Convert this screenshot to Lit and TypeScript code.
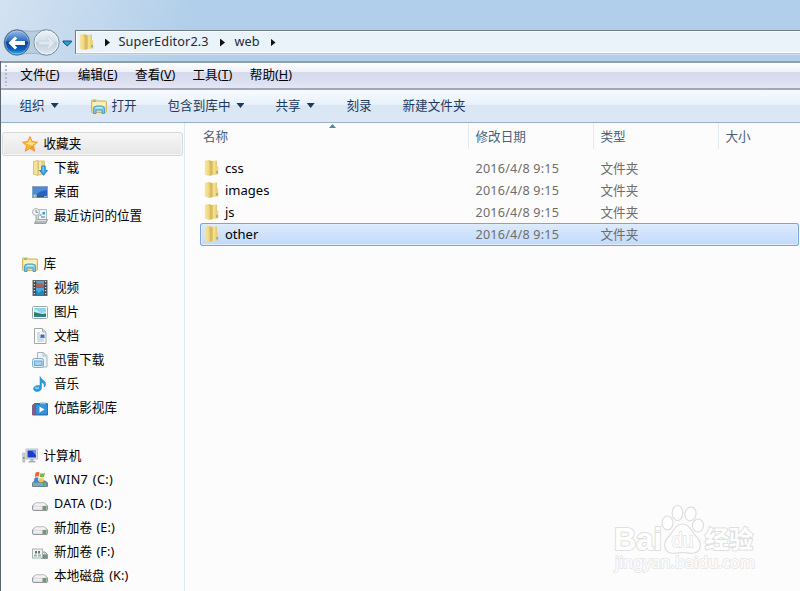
import { LitElement, html, css, svg } from "lit";
import { customElement } from "lit/decorators.js";
import { classMap } from "lit/directives/class-map.js";

const drive = svg`<path d="M3.500 7h9l3 3v3q0 1.500-1.500 1.500H2Q.5 14.500.5 13v-3z" fill="#d3d4da" stroke="#94969d"/><path d="M3.700 7.300h8.600l2.200 2.500h-13z" fill="#f4f4f6"/><path d="M1.500 10.500h9v3h-9z" fill="#ececf1"/><rect x="10.500" y="10" width="4" height="4" fill="#8a8e92"/><rect x="12" y="10.500" width="2" height="3" fill="#3fb82f"/>`;

const library = svg`<path d="M.5 3q0-1 1-1h4l1 1h8q1 0 1 1v9.500q0 1-1 1h-13q-1 0-1-1z" fill="#efdc8d" stroke="#d0b767"/><path d="M1.500 4h13v4h-13z" fill="#fbf1bb"/><rect x="2" y="2.500" width="3" height="1.300" fill="#6dc25a"/><path d="M2.500 15.500V11q0-3 3-3h5q3 0 3 3v4.500H11V12H5v3.500z" fill="#7cc6ea" stroke="#4e9fca"/><path d="M4 10.500Q4 9 6 9h4q2 0 2 1.500z" fill="#c4ebfa"/>`;

const icons: Record<string, unknown> = {
  star: svg`<path d="M8 .5l2.200 5 5.300.7-4 3.600 1.200 5.400L8 12.500 3.300 15.200l1.200-5.400-4-3.600 5.300-.7z" fill="#fdb62f" stroke="#e58b35" stroke-width=".8"/><path d="M8 2.500l1.500 4 4 .4-3.500 2.600L3 7l3.600-.5z" fill="#ffe27d"/><path d="M8 11l3.500 3-.8-4z" fill="#f4902b"/>`,
  download: svg`<path d="M6 1h6.500v13L6 15z" fill="#ebd27d" stroke="#d5bb6a" stroke-width=".8"/><path d="M1.500 1.500L6 .5v15l-4.500-1.200z" fill="#f5e29a" stroke="#d3b966" stroke-width=".8"/><path d="M7 1.500h2V14H7z" fill="#f9e9ac"/><path d="M9.800 6h3.400v4.500h2.300l-4 4.800-4-4.800h2.300z" fill="#38a6ee" stroke="#2278c0" stroke-width=".9"/><path d="M10.500 6.500H12v5h-1.500z" fill="#7fcdf9"/>`,
  desktop: svg`<rect x=".5" y="2.500" width="15" height="11" fill="#2762bf" stroke="#8ba3be"/><path d="M1 3h14v3Q8 6 3 12H1z" fill="#4b89da"/><path d="M1 12h14v1.300H1z" fill="#2c4f85"/><circle cx="3" cy="12" r="1.800" fill="#8dd3e8"/><path d="M3 11h1.700v2H3z" fill="#e7a347"/><path d="M12 12h3v1h-3z" fill="#9ab6d7"/>`,
  recent: svg`<path d="M6.500 1.500h8v11h-8z" fill="#f3f6f8" stroke="#b0b8bc"/><path d="M7.500 6h2v2h-2zM9 8h4v2H9z" fill="#8bbbd9"/><rect x="10.500" y="4" width="2.500" height="2.500" fill="#3f93d3"/><circle cx="4" cy="4" r="3.500" fill="#f1f3f3" stroke="#adb2b4"/><path d="M4 2v2.300h2" fill="none" stroke="#7d888e"/><path d="M4.500 11.500h11l-1.500 4H2.500z" fill="#b4b8bb" stroke="#9ca1a4"/><path d="M4.500 8v4" stroke="#b3b8bb" stroke-width="2"/><path d="M4.500 12.500h9.500" stroke="#dfe2e4"/>`,
  library,
  video: svg`<rect x="1" y=".5" width="14" height="15" fill="#3a434b" stroke="#62676c"/><rect x="4" y="1" width="8" height="6.500" fill="#4ba5d8"/><rect x="4" y="8" width="8" height="7" fill="#4baae2"/><path d="M4 2l3 2 2-1 3 2v2.500H4z" fill="#a36259"/><path d="M4 10l3 3 3-3 2 2v3H4z" fill="#2a82ba"/><path d="M2.500 1v14M13.500 1v14" stroke="#d5dce0" stroke-width="1.300" stroke-dasharray="1.300 1.700"/>`,
  picture: svg`<rect x=".5" y="2.500" width="15" height="12" rx="1" fill="#fff" stroke="#9da8ad"/><rect x="2" y="4" width="12" height="9" fill="#8bd5ee"/><path d="M2 5l4 2 3 2 5-1v2H2z" fill="#c6eff3"/><path d="M2 8l4 1 4 1 4-.5v3H2z" fill="#2c8067"/><path d="M2 11.500h12V13H2z" fill="#377dac"/>`,
  document: svg`<path d="M2.500 .5h8L14 4v11.500H2.500z" fill="#fcfdfe" stroke="#a0a7ab"/><path d="M10.500.5V4H14" fill="#dce2e7" stroke="#a0a9ae"/><path d="M5 5h3M5 7h3M5 9h3M5 11h7M5 13h7" stroke="#b0bdce"/><rect x="8.500" y="6.500" width="4" height="3.500" fill="#2d72b8"/><path d="M8.500 9h4v1h-4z" fill="#43a283"/>`,
  thunder: svg`<path d="M5.500.5h6l3.500 3V15h-9.500z" fill="#eff5f9" stroke="#a3b4bd"/><path d="M11 .5V4h4" fill="#d1e4ef" stroke="#a9bac4"/><rect x=".5" y="6.500" width="11" height="9" rx="2" fill="#e2f1f9" stroke="#8aa9ba"/><rect x="2.500" y="9" width="7.500" height="4.500" fill="#9ed4f6" stroke="#5ba7d7"/>`,
  music: svg`<path d="M8 .5c1 3.500 6.500 4 5.500 8.500-.2 1-.6 1.500-1.500 2 1-3-.8-4-2.500-4.500V12c0 2-2 3.500-4.500 3.500-2.200 0-3.500-1.200-3.500-2.700 0-2.400 3.500-4.200 6.500-3z" fill="#2c9ade" stroke="#2c7fbb" stroke-width=".5"/><ellipse cx="5" cy="12" rx="2.300" ry="1.200" fill="#74c9f5"/>`,
  youku: svg`<path d="M.5 5.500l2-2H15q.5 0 .5.500v11H.5z" fill="#2777be" stroke="#3572ac"/><path d="M8 2.500h6v2H8z" fill="#7bb7df"/><path d="M.5 4.500h2V15h-2z" fill="#ce4554"/><path d="M4 5h11v9H4z" fill="#3593dc"/><path d="M7.500 6.500v6l5-3z" fill="#fff"/>`,
  computer: svg`<path d="M.8 5h2v9h-2z" fill="#d7dadd" stroke="#a1a6aa" stroke-width=".7"/><path d="M1 9h1.500v2H1z" fill="#4abf41"/><rect x="4" y="1" width="11.500" height="10" fill="#dfe1e5" stroke="#b1b5ba" stroke-width=".8"/><rect x="5.500" y="2.500" width="8.500" height="7" fill="#163fc6"/><path d="M10 2.500h4v5z" fill="#6795f0"/><path d="M8.500 11h3v2h2v1.500h-7V13h2z" fill="#acb1b6"/>`,
  windows: svg`<path d="M2.500 9h11l2 2v3.500H.5V11z" fill="#668ba0" stroke="#6c8592"/><path d="M1 11h10v3H1z" fill="#7daabd"/><rect x="12" y="11" width="2" height="3" fill="#57cc39"/><path d="M3.500.8Q5.700-.7 7.500.5L6.700 4.500Q5 3.800 2.700 5z" fill="#ec642e"/><path d="M8.500 1q1.800 1 4.500 0L12 5q-2 1-4.300-.2z" fill="#78b943"/><path d="M2.500 6q2-1.200 4-.3l-.8 4q-2-1-4 .2z" fill="#3989da"/><path d="M7.500 6q2 1 4.300 0L11 10q-2 .8-4.300-.3z" fill="#f4c634"/>`,
  drive,
  shared: svg`<path d="M9 8h4l2.500 2.500v4H9z" fill="#d7d8db" stroke="#94979a"/><path d="M11 10.500h4V14h-4z" fill="#7c8284"/><rect x="12.500" y="10.500" width="1.500" height="3" fill="#4dc436"/><rect x=".5" y="5" width="10" height="9" fill="#eff3f2" stroke="#a9b2b0"/><path d="M3 7h2v2.500H3zM6 7h2v2.500H6z" fill="#85705f"/><path d="M2 10.500h3v2H2zM6 10.500h3v2H6z" fill="#8ec0b8"/>`,
  folder: svg`<defs><linearGradient id="fa"><stop stop-color="#f7e6a3"/><stop offset=".5" stop-color="#efd983"/><stop offset="1" stop-color="#cfae50"/></linearGradient><linearGradient id="fb"><stop stop-color="#e5c766"/><stop offset=".45" stop-color="#f6e295"/><stop offset="1" stop-color="#dcbc5c"/></linearGradient></defs><path d="M6.500 1L13 .6V9.500l1.200.7v4L8 15.300z" fill="url(#fb)"/><path d="M.8 .8L5 0l3.300 1.200V15L5 16 .8 14.500z" fill="url(#fa)"/><path d="M5.200.5l3.100.9V15l-2.200.6q.7-8-.9-15.100z" fill="#d9bb5e"/><path d="M12.500 6.300h1.700V11h-1.700z" fill="#f0d67c"/><path d="M12.500 11h1v2.200h-1z" fill="#5f9dbd"/>`,
};

const icon = (name: string) => html`<svg class="icon" viewBox="0 0 16 16">${icons[name]}</svg>`;

type Entry = { icon: string; label: string };
const groups: { head: Entry; selected?: boolean; items: Entry[] }[] = [
  {
    head: { icon: "star", label: "收藏夹" },
    selected: true,
    items: [
      { icon: "download", label: "下载" },
      { icon: "desktop", label: "桌面" },
      { icon: "recent", label: "最近访问的位置" },
    ],
  },
  {
    head: { icon: "library", label: "库" },
    items: [
      { icon: "video", label: "视频" },
      { icon: "picture", label: "图片" },
      { icon: "document", label: "文档" },
      { icon: "thunder", label: "迅雷下载" },
      { icon: "music", label: "音乐" },
      { icon: "youku", label: "优酷影视库" },
    ],
  },
  {
    head: { icon: "computer", label: "计算机" },
    items: [
      { icon: "windows", label: "WIN7 (C:)" },
      { icon: "drive", label: "DATA (D:)" },
      { icon: "drive", label: "新加卷 (E:)" },
      { icon: "shared", label: "新加卷 (F:)" },
      { icon: "drive", label: "本地磁盘 (K:)" },
    ],
  },
];

const menus = [["文件", "F"], ["编辑", "E"], ["查看", "V"], ["工具", "T"], ["帮助", "H"]];
const files = ["css", "images", "js", "other"];

@customElement("app-root")
export class AppRoot extends LitElement {
  static styles = css`
    :host { display: block; width: 800px; height: 591px; overflow: hidden; position: relative;
      font: 12.6px/22px "Noto Sans", "Noto Sans CJK SC", sans-serif; color: #000; background: #fcfcfc; }
    * { box-sizing: border-box; }
    .window { display: flex; flex-direction: column; height: 591px; }
    .icon { width: 16px; height: 16px; flex: none; display: block; }
    .top { height: 61px; flex: none; padding-top: 28px; display: flex;
      background: linear-gradient(110deg, #d3e2f2 0, #c6daee 75px, #b1cfea 185px, #b1cfea); }
    .nav { width: 75px; height: 30px; flex: none; display: block; }
    .address { margin-top: 2px; flex: 1; height: 24px; border: 1px solid #6d7c8b; border-right: 0;
      border-bottom-color: #b4c5d5; background: #eaf2fa; box-shadow: inset 1px 1px #fff, inset 0 -1px #fff, 0 1px #cfe2f3;
      display: flex; align-items: center; padding-left: 3px; color: #252b33; font-size: 12.7px; white-space: nowrap; }
    .address .icon { margin-right: 10px; }
    .chev { width: 5px; height: 8px; background: #111; clip-path: polygon(0 0, 100% 50%, 0 100%); flex: none; margin-top: 1px; }
    .crumb { margin: -2px 10px 0 8.500px; }
    .crumb.first { width: 91.500px; letter-spacing: .12px; }
    .crumb.second { width: 26px; margin-left: 9.500px; }
    .body { flex: 1; min-height: 0; border-left: 1px solid #5b6673; display: flex; flex-direction: column; }
    .menu { height: 29px; flex: none; border-top: 2px solid #929daa; border-bottom: 2px solid #a5a8b8; display: flex; align-items: center;
      background: linear-gradient(#fff 0, #eef0f7 36%, #d4daec 37%, #dcdff0 75%, #e5e7f4 100%); }
    .grip { width: 2px; height: 21px; margin-left: 4px; background: repeating-linear-gradient(#b3b6c3 0 2px, transparent 2px 4px); }
    .item { width: 57.400px; white-space: nowrap; margin-top: -2px; }
    .item.start { margin-left: 13.300px; }
    u { text-underline-offset: 1px; }
    .tools { height: 33px; flex: none; display: flex; align-items: center; color: #1e395b;
      background: linear-gradient(#f8fbff 0, #e8f1fb 45%, #dae6f4 48%, #dce7f5 100%); border-bottom: 1px solid #9cb0ca; padding-left: 18.500px; }
    .tool { display: flex; align-items: center; gap: 6px; white-space: nowrap; height: 28px; }
    .tool .icon { margin-right: -1px; margin-top: -1px; }
    .organize { width: 71px; } .open { width: 77px; } .include { width: 108px; } .share { width: 71px; } .burn { width: 56px; }
    .down { width: 8px; height: 5px; background: #1e395b; clip-path: polygon(0 0, 100% 0, 50% 100%); margin-top: -1px; }
    .main { flex: 1; min-height: 0; display: flex; }
    .side { width: 184px; flex: none; border-right: 1px solid #dce8f6; padding: 9px 1px 0; }
    .group { margin-bottom: 24px; }
    .entry { display: flex; align-items: center; height: 24px; line-height: 20px; white-space: nowrap; gap: 6px; padding-left: 30px; }
    .entry.head { padding-left: 20px; gap: 5.500px; }
    .entry.latin { word-spacing: 1px; letter-spacing: .35px; }
    .entry.mixed { word-spacing: 1px; letter-spacing: .1px; }
    .entry.selected { border: 1px solid #d9d9d9; border-radius: 3px; padding-left: 19px;
      background: linear-gradient(#f7f7f7, #e6e6e6); box-shadow: inset 0 0 0 1px #f6f6f6; }
    .list { flex: 1; min-width: 0; padding-left: 15px; }
    .cols { display: grid; grid-template-columns: 269px 125px 125px 1fr; position: relative; height: 35px; color: #4c607a; }
    .col { padding: 3px 0 0 6.500px; height: 26px; border-right: 1px solid #e2ecf7; }
    .col.name { padding-left: 3px; } .col.last { border: 0; }
    .sort { position: absolute; left: 129px; top: 1px; width: 7px; height: 4px; background: #55879f; clip-path: polygon(50% 0, 100% 100%, 0 100%); }
    .row { display: grid; grid-template-columns: 275.500px 125px 1fr; height: 22px; line-height: 22px; color: #6d6d6d; }
    .file { display: flex; align-items: center; height: 20px; padding-left: 4px; gap: 5px; color: #000; font-size: 13px; }
    .cell { white-space: nowrap; }
    .cell.date { letter-spacing: .22px; }
    .row.selected { margin: -1px 1px 0 0; height: 23px; padding-top: 1px; border-radius: 3px;
      background: linear-gradient(#deebfc, #c0d9fa); box-shadow: inset 0 0 0 1px #7ea3d5, inset 0 0 0 2px #e1edfc; }
    .mark { position: absolute; left: 610px; top: 500px; width: 150px; height: 78px; overflow: visible; }
    .word { font-family: "Liberation Sans", "Noto Sans CJK SC", sans-serif; font-weight: 700; fill: #fff; stroke: #e0e0e0; stroke-width: 2px; paint-order: stroke; }
    .word.inner { stroke-width: 1.400px; font-weight: 400; }
    .site { font-family: "Noto Sans", sans-serif; fill: #fff; stroke: #e4e4e4; stroke-width: 1.500px; paint-order: stroke; }
  `;

  private entry(e: Entry, head = false, selected = false) {
    const hasLatin = e.label.includes("(");
    const latin = hasLatin && /^[A-Z]/.test(e.label);
    return html`<div class=${classMap({ entry: true, head, selected, latin, mixed: hasLatin && !latin })}>${icon(e.icon)}<span>${e.label}</span></div>`;
  }

  render() {
    return html`<div class="window">
      <div class="top">
        <svg class="nav" viewBox="0 0 75 30">
          <defs>
            <linearGradient id="blue" x2="0" y2="1"><stop stop-color="#9bc0ea"/><stop offset=".42" stop-color="#3470bd"/><stop offset=".5" stop-color="#0c3f93"/><stop offset=".8" stop-color="#0d66c2"/><stop offset="1" stop-color="#35c5f6"/></linearGradient>
            <linearGradient id="glass" x2="0" y2="1"><stop stop-color="#edf3f8"/><stop offset=".48" stop-color="#d3dfea"/><stop offset=".5" stop-color="#c0d1e0"/><stop offset="1" stop-color="#dce9f4"/></linearGradient>
          </defs>
          <path d="M17 1.500Q31 5 46 1.500A13 13 0 0 1 46 27.500Q31 23 17 27.500A13 13 0 0 1 17 1.500" fill="#b9cde0" stroke="#9fb4c9"/>
          <circle cx="17" cy="14.500" r="12.500" fill="url(#blue)" stroke="#51698c"/>
          <circle cx="17" cy="14.500" r="11.500" fill="none" stroke="#b8d7f4" stroke-opacity=".5"/>
          <path d="M8.500 15l6.500-6.500 2.200 2L14.700 13H25v4H14.700l2.500 2.500-2.200 2z" fill="#fff"/>
          <circle cx="46.500" cy="14.500" r="12.500" fill="url(#glass)" stroke="#7f8f9f"/>
          <circle cx="46.500" cy="14.500" r="11.500" fill="none" stroke="#f2f7fc"/>
          <path d="M55 15l-6.500-6.500-2.200 2 2.500 2.500H38.500v4h10.300l-2.500 2.500 2.200 2z" fill="#dfe8f0" stroke="#bfced9" stroke-width=".7"/>
          <path d="M63 13h8.500v1L67.200 18 63 14z" fill="#2c9fd2" stroke="#174f80"/>
        </svg>
        <div class="address">
          ${icon("folder")}<i class="chev"></i><span class="crumb first">SuperEditor2.3</span><i class="chev"></i><span class="crumb second">web</span><i class="chev"></i>
        </div>
      </div>
      <div class="body">
        <div class="menu"><i class="grip"></i>${menus.map(([t, k], i) => html`<span class=${classMap({ item: true, start: i === 0 })}>${t}(<u>${k}</u>)</span>`)}</div>
        <div class="tools">
          <span class="tool organize">组织<i class="down"></i></span>
          <span class="tool open">${icon("library")}打开</span>
          <span class="tool include">包含到库中<i class="down"></i></span>
          <span class="tool share">共享<i class="down"></i></span>
          <span class="tool burn">刻录</span>
          <span class="tool">新建文件夹</span>
        </div>
        <div class="main">
          <div class="side">${groups.map((g) => html`<div class="group">${this.entry(g.head, true, !!g.selected)}${g.items.map((e) => this.entry(e))}</div>`)}</div>
          <div class="list">
            <div class="cols"><span class="col name">名称</span><span class="col">修改日期</span><span class="col">类型</span><span class="col last">大小</span><i class="sort"></i></div>
            ${files.map((f) => html`<div class=${classMap({ row: true, selected: f === "other" })}><span class="file">${icon("folder")}<span>${f}</span></span><span class="cell date">2016/4/8 9:15</span><span class="cell">文件夹</span></div>`)}
          </div>
        </div>
      </div>
      <svg class="mark" viewBox="0 0 150 78">
        <text class="word" x="4" y="49.500" font-size="31" textLength="48" lengthAdjust="spacingAndGlyphs">Bai</text>
        <g fill="#fff" stroke="#dedede" stroke-width="1.200">
          <ellipse cx="57.500" cy="23" rx="5.500" ry="7"/><ellipse cx="67.500" cy="13" rx="5.300" ry="7.500"/><ellipse cx="80.500" cy="14" rx="5.500" ry="7" transform="rotate(12 80.500 14)"/><ellipse cx="88" cy="25.500" rx="5.500" ry="6.500"/>
          <path d="M72.500 24c7.500 0 9.500 9 15 14 5 6 3 14-3.500 15-4 1-7.500-.5-11.500-.5s-7.500 1.500-11.500.5c-6.500-1-8.500-9-3.500-15 5.500-5 7.500-14 15-14z"/>
        </g>
        <text class="word inner" x="61.500" y="46.500" font-size="20" textLength="22" lengthAdjust="spacingAndGlyphs">du</text>
        <text class="word" x="95" y="48" font-size="24" textLength="48">经验</text>
        <text class="site" x="5" y="67.500" font-size="15.500" textLength="140" lengthAdjust="spacingAndGlyphs">jingyan.baidu.com</text>
      </svg>
    </div>`;
  }
}
